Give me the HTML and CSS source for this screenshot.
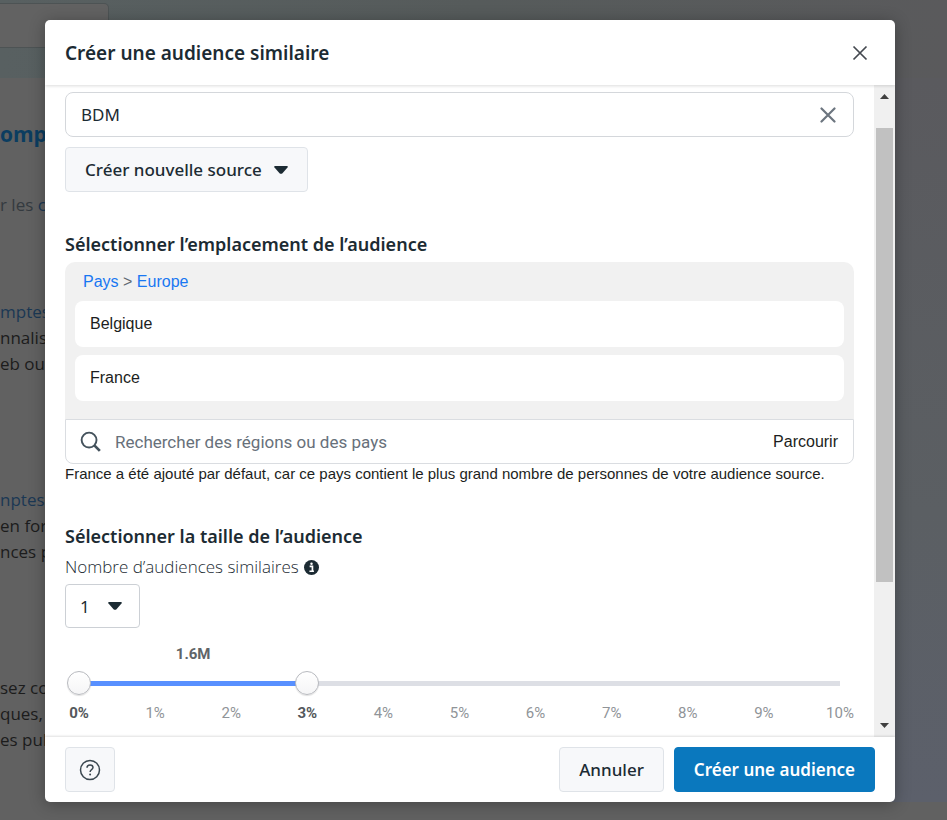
FILE: index.html
```html
<!DOCTYPE html>
<html lang="fr">
<head>
<meta charset="utf-8">
<meta name="viewport" content="width=device-width, initial-scale=1">
<title>Créer une audience similaire</title>
<link rel="stylesheet" href="styles.css">
</head>
<body>
<div class="page" aria-hidden="true">
  <div class="hero"><div class="hero-field"></div></div>
  <div class="article">
    <h2 class="article-title">omp</h2>
    <p class="lead">r les <span class="ref">c</span></p>
    <p class="para"><span class="ref">mptes</span><br>nnalisé<br>eb ou</p>
    <p class="para"><span class="ref">nptes</span> s<br>en for<br>nces p</p>
    <p class="para">sez co<br>ques, c<br>es pub</p>
  </div>
  <div class="rail"></div>
</div>

<div class="overlay">
  <section class="dialog" role="dialog" aria-modal="true" aria-labelledby="dialog-title">
    <header class="dialog-header">
      <h1 class="title" id="dialog-title">Créer une audience similaire</h1>
      <button class="icon-button" type="button" aria-label="Fermer">
        <svg width="16" height="16" viewBox="0 0 16 16"><path d="M1.500 1.500l13 13M14.500 1.500l-13 13" stroke="#444950" stroke-width="1.700" fill="none"/></svg>
      </button>
    </header>

    <div class="dialog-body">
      <div class="content">
        <div class="source-field">
          <input class="source-input" type="text" value="BDM" aria-label="Source">
          <button class="icon-button" type="button" aria-label="Effacer">
            <svg width="16" height="16" viewBox="0 0 16 16"><path d="M1.500 1.500l13 13M14.500 1.500l-13 13" stroke="#6c757f" stroke-width="2.200" stroke-linecap="round" fill="none"/></svg>
          </button>
        </div>
        <button class="button new-source" type="button">Créer nouvelle source
          <svg width="14" height="8" viewBox="0 0 14 8"><path d="M1 0h12q1.300.5.500 1.500L8.500 7.200Q7 8.300 5.500 7.200L.5 1.500Q-.3.500 1 0z" fill="#1c2b33"/></svg>
        </button>

        <h2 class="section-title location-title">Sélectionner l’emplacement de l’audience</h2>
        <div class="locations">
          <nav class="crumbs"><a href="#">Pays</a> <span>&gt;</span> <a href="#">Europe</a></nav>
          <ul class="location-list">
            <li>Belgique</li>
            <li>France</li>
          </ul>
        </div>
        <div class="search">
          <svg width="21" height="21" viewBox="0 0 22 22" fill="none" stroke="#44525c"><circle cx="9.500" cy="9.500" r="7.800" stroke-width="2"/><path d="M15.300 15.300l5.500 5.500" stroke-width="2.800"/></svg>
          <input class="search-input" type="text" placeholder="Rechercher des régions ou des pays" aria-label="Rechercher des régions ou des pays">
          <button class="browse" type="button">Parcourir</button>
        </div>
        <p class="note">France a été ajouté par défaut, car ce pays contient le plus grand nombre de personnes de votre audience source.</p>

        <h2 class="section-title size-title">Sélectionner la taille de l’audience</h2>
        <div class="count-label">
          <label for="count">Nombre d’audiences similaires</label>
          <svg width="15" height="15" viewBox="0 0 16 16"><circle cx="8" cy="8" r="8" fill="#1c2b33"/><path d="M6 6.800h3v5M5.800 12h4.800" stroke="#fff" stroke-width="1.800" fill="none"/><circle cx="8" cy="3.900" r="1.300" fill="#fff"/></svg>
        </div>
        <div class="count">
          <select class="count-select" id="count"><option>1</option><option>2</option><option>3</option></select>
          <svg class="count-arrow" width="14" height="8" viewBox="0 0 14 8"><path d="M1 0h12q1.300.5.500 1.500L8.500 7.200Q7 8.300 5.500 7.200L.5 1.500Q-.3.500 1 0z" fill="#1c2b33"/></svg>
        </div>

        <div class="range">
          <div class="range-value"><output>1.6M</output></div>
          <div class="slider">
            <div class="track"><div class="track-fill"></div></div>
            <input class="thumb" type="range" min="0" max="10" value="0" aria-label="Minimum">
            <input class="thumb" type="range" min="0" max="10" value="3" aria-label="Maximum">
          </div>
          <div class="ticks">
            <span class="tick tick-on">0%</span><span class="tick">1%</span><span class="tick">2%</span><span class="tick tick-on">3%</span><span class="tick">4%</span><span class="tick">5%</span><span class="tick">6%</span><span class="tick">7%</span><span class="tick">8%</span><span class="tick">9%</span><span class="tick">10%</span>
          </div>
        </div>
      </div>
      <div class="scrollbar" aria-hidden="true">
        <svg width="9" height="5" viewBox="0 0 9 5"><path d="M0 5L4.500 0 9 5z" fill="#404040"/></svg>
        <div class="scroll-track"><div class="scroll-thumb"></div></div>
        <svg width="9" height="5" viewBox="0 0 9 5"><path d="M0 0L4.500 5 9 0z" fill="#404040"/></svg>
      </div>
    </div>

    <footer class="dialog-footer">
      <button class="button help" type="button" aria-label="Aide">
        <svg width="22" height="22" viewBox="0 0 22 22" fill="none" stroke="#3a4750"><circle cx="11" cy="11" r="9.500" stroke-width="1.500"/><path d="M8 8.800c0-1.800 1.300-2.900 3-2.900s3 1.100 3 2.700c0 2-2.900 2.200-2.900 4.300" stroke-width="1.500"/><circle cx="11.100" cy="15.400" r="1" fill="#3a4750" stroke="none"/></svg>
      </button>
      <button class="button" type="button">Annuler</button>
      <button class="button primary" type="button">Créer une audience</button>
    </footer>
  </section>
</div>
</body>
</html>
```
FILE: styles.css
```css
* { box-sizing: border-box; }

body {
  margin: 0;
  min-height: 100vh;
  overflow: hidden;
  color: #1c2b33;
  font-family: "Noto Sans", "Open Sans", sans-serif;
}

h1, h2, p, ul { margin: 0; padding: 0; }
button, input, select { font: inherit; color: inherit; }
svg { display: block; flex: none; }

/* Dimmed page */
.page {
  position: fixed;
  inset: 0;
  display: grid;
  grid-template: 78px 1fr 18px / 1fr 64px;
  overflow: hidden;
  background: #616161;
}
.hero {
  grid-column: 1 / -1;
  padding-top: 3px;
  background: linear-gradient(90deg, #586061, #565b5b 50%, #5a5a5c);
}
.hero-field {
  width: 109px;
  height: 45px;
  border: 1px solid #4d5354;
  border-left: 0;
  border-radius: 0 5px 5px 0;
  background: #626262;
}
.article {
  padding-top: 41px;
  white-space: nowrap;
  font-family: "Open Sans", "Noto Sans", sans-serif;
  font-size: 17px;
  line-height: 26px;
  color: #1c1c1c;
}
.article-title {
  font-size: 21px;
  line-height: 30px;
  color: #0b3d60;
}
.lead { margin: 43px 0 0; color: #343a3f; }
.para { margin-top: 110px; }
.lead + .para { margin-top: 81px; }
.ref { color: #1b3854; }
.rail { background: linear-gradient(#5a5a5e, #5b5f63 60%, #5c606b); }

/* Dialog */
.overlay {
  position: fixed;
  inset: 0;
  padding: 20px 52px 18px 45px;
}
.dialog {
  display: flex;
  flex-direction: column;
  height: 100%;
  overflow: hidden;
  border-radius: 5px;
  background: #fff;
  box-shadow: 0 2px 16px rgba(0, 0, 0, .3);
}
.dialog-header {
  display: flex;
  align-items: center;
  justify-content: space-between;
  height: 65px;
  padding: 0 20px;
  box-shadow: 0 1px 3px rgba(0, 0, 0, .14);
  z-index: 1;
}
.title { font-size: 19px; font-weight: 600; line-height: 26px; }
.icon-button {
  display: grid;
  place-items: center;
  width: 30px;
  height: 30px;
  padding: 0;
  border: 0;
  background: none;
}

.dialog-body { display: flex; flex: 1; min-height: 0; }
.content { flex: 1; min-width: 0; padding: 7px 20px 0; overflow: hidden; }

.button {
  display: inline-flex;
  align-items: center;
  justify-content: center;
  gap: 12px;
  height: 45px;
  padding: 0 19px;
  border: 1px solid #dfe3e8;
  border-radius: 4px;
  background: #f7f8fa;
  font-size: 17px;
  font-weight: 500;
}
.source-field {
  display: flex;
  align-items: center;
  height: 45px;
  padding: 0 10px 0 15px;
  border: 1px solid #d4d7db;
  border-radius: 8px;
}
.source-input {
  flex: 1;
  min-width: 0;
  padding: 0;
  border: 0;
  background: none;
  font-size: 17px;
}
.new-source { margin-top: 10px; }

.section-title { font-size: 18px; font-weight: 600; line-height: 24px; }
.location-title { margin: 40px 0 6px; }

.locations {
  padding: 8px 10px 18px;
  border-radius: 10px 10px 0 0;
  background: #f1f1f1;
  font-family: "Liberation Sans", Arial, sans-serif;
  font-size: 16px;
  color: #1c1e21;
}
.crumbs { padding: 0 8px; line-height: 24px; margin-bottom: 7px; }
.crumbs a { color: #1877f2; text-decoration: none; }
.crumbs span { color: #606770; }
.location-list { display: grid; gap: 8px; list-style: none; }
.location-list li {
  padding: 0 15px;
  border-radius: 8px;
  background: #fff;
  line-height: 46px;
}
.search {
  display: flex;
  align-items: center;
  gap: 14px;
  height: 45px;
  padding: 0 15px 0 14px;
  border: 1px solid #dadde1;
  border-radius: 0 0 8px 8px;
}
.search-input {
  flex: 1;
  min-width: 0;
  padding: 0;
  border: 0;
  background: none;
  font-family: Roboto, sans-serif;
  font-size: 17px;
}
.search-input::placeholder { color: #67707a; opacity: 1; }
.browse {
  padding: 0;
  border: 0;
  background: none;
  font-family: "Liberation Sans", Arial, sans-serif;
  font-size: 16px;
  color: #1c1e21;
}
.note {
  font-family: "Liberation Sans", Arial, sans-serif;
  font-size: 15px;
  line-height: 20px;
  color: #1c1e21;
}

.size-title { margin-top: 40px; }
.count-label {
  display: flex;
  align-items: center;
  gap: 5px;
  margin: 7px 0 5px;
  font-family: "Open Sans", "Noto Sans", sans-serif;
  font-size: 17px;
  font-weight: 300;
  line-height: 24px;
  color: #1c2b33;
}
.count { display: grid; align-items: center; width: 75px; }
.count > * { grid-area: 1 / 1; }
.count-select {
  width: 100%;
  height: 44px;
  padding: 0 14px;
  appearance: none;
  border: 1px solid #ccd0d5;
  border-radius: 4px;
  background: #fff;
  font-size: 17px;
}
.count-arrow { justify-self: end; margin-right: 18px; pointer-events: none; }

.range {
  padding: 0 14px;
  font-family: Roboto, sans-serif;
  font-size: 15px;
  line-height: 20px;
  color: #909498;
}
.range-value {
  width: 30%;
  margin-top: 16px;
  text-align: center;
  font-weight: 700;
  color: #606468;
}
.slider { display: grid; align-items: center; height: 24px; margin: 7px -12px 8px; }
.slider > * { grid-area: 1 / 1; }
.track { height: 5px; margin: 0 12px; background: #dddfe5; }
.track-fill { width: 30%; height: 100%; background: #5890ff; }
.thumb {
  width: 100%;
  height: 24px;
  margin: 0;
  appearance: none;
  background: none;
  pointer-events: none;
}
.thumb::-webkit-slider-thumb {
  appearance: none;
  width: 24px;
  height: 24px;
  border: 1px solid #b8babf;
  border-radius: 50%;
  background: linear-gradient(#fff, #f5f5f6);
  box-shadow: 0 1px 1px rgba(0, 0, 0, .12);
  pointer-events: auto;
}
.ticks { display: flex; justify-content: space-between; }
.tick { display: flex; justify-content: center; width: 0; }
.tick-on { font-weight: 700; color: #54585c; }

.scrollbar {
  display: flex;
  flex-direction: column;
  align-items: center;
  gap: 6px;
  width: 21px;
  padding: 9px 2px;
  background: #f0f0f0;
}
.scroll-track { flex: 1; width: 100%; padding-top: 23px; }
.scroll-thumb { height: 77%; background: #c1c1c1; }

.dialog-footer {
  display: flex;
  align-items: center;
  gap: 10px;
  height: 65px;
  padding: 0 20px;
  box-shadow: 0 -1px 2px rgba(0, 0, 0, .12);
}
.help { width: 50px; margin-right: auto; padding: 0; }
.primary { border-color: #0a78be; background: #0a78be; color: #fff; font-weight: 600; }
```
